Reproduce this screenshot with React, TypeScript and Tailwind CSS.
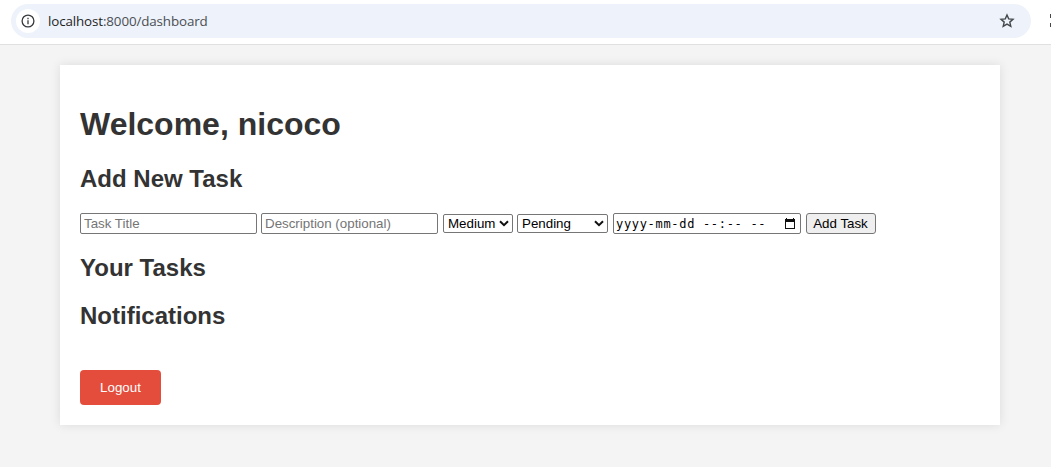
import React from "react";

const field =
  "box-border h-[21px] w-[177px] rounded-[2px] border border-[#767676] bg-white px-[3px] text-[13.333px] leading-[17px] text-black placeholder:text-[#757575] outline-none";

function Picker({ label, className }: { label: string; className: string }) {
  return (
    <button
      type="button"
      className={`flex h-[19px] items-center justify-between rounded-[2px] border border-[#767676] bg-white pl-1 pr-[3px] text-[13.333px] leading-[17px] text-black ${className}`}
    >
      <span>{label}</span>
      <svg width="10" height="7" viewBox="0 0 10 7" fill="none" stroke="#101010" strokeWidth="2">
        <path d="M1 1.2 L5 5.2 L9 1.2" />
      </svg>
    </button>
  );
}

function AddressBar() {
  return (
    <header className="flex h-[45px] items-start overflow-hidden border-b border-[#dfe0e1] bg-white pl-[11px] pt-1">
      <div className="flex h-[34px] w-[1020px] shrink-0 items-center rounded-full bg-[#edf2fb] pl-[5px] pr-4">
        <span className="flex size-6 items-center justify-center rounded-full bg-white">
          <svg width="14" height="14" viewBox="0 0 14 14" fill="none" stroke="#37393c" strokeWidth="1.3">
            <circle cx="7" cy="7" r="5.9" />
            <path d="M7 6.3V10.2M7 3.8V5.3" />
          </svg>
        </span>
        <span className="ml-2 font-['Open_Sans','Noto_Sans',sans-serif] text-[13.4px] leading-[18px] tracking-[-0.13px] text-[#4b4e52]">
          <span className="text-[#1f1f1f]">localhost</span>:8000/dashboard
        </span>
        <svg className="ml-auto" width="16" height="16" viewBox="0 0 16 16" fill="none" stroke="#44474a" strokeWidth="1.4">
          <path d="M8 2 L9.7 5.9 L14 6.3 L10.8 9.1 L11.8 13.4 L8 11.1 L4.2 13.4 L5.2 9.1 L2 6.3 L6.3 5.9 Z" />
        </svg>
      </div>
      <svg className="ml-[19px] mt-[10px] shrink-0" width="12" height="13" viewBox="0 0 12 13" fill="#44474a">
        <path d="M0 0h5v4H0zM0 9h5v4H0zM7 0h5v4H7zM7 9h5v4H7z" />
      </svg>
    </header>
  );
}

export default function App() {
  return (
    <div className="h-[467px] overflow-hidden bg-[#f4f4f4] font-['Liberation_Sans',Arial,sans-serif] text-[#333]">
      <AddressBar />
      <main className="mx-auto ml-[60px] mt-5 h-[360px] w-[940px] bg-white px-5 pt-[41px] shadow-[0_0_10px_rgba(0,0,0,0.1)]">
        <h1 className="text-[32px] font-bold leading-[37px]">Welcome, nicoco</h1>
        <h2 className="mt-[22px] text-2xl font-bold leading-7">Add New Task</h2>
        <form className="mt-5 flex items-center" onSubmit={(e) => e.preventDefault()}>
          <input className={field} placeholder="Task Title" />
          <input className={`${field} ml-1`} placeholder="Description (optional)" />
          <Picker label="Medium" className="ml-[5px] w-[70px]" />
          <Picker label="Pending" className="ml-1 w-[91px]" />
          <div className="ml-[5px] flex h-[21px] w-[188px] items-center justify-between rounded-[2px] border border-[#767676] bg-white pl-0.5 pr-1 text-black">
            <span className="whitespace-pre pt-0.5 font-['DejaVu_Sans_Mono',monospace] text-[12px] leading-[17px] tracking-[0.68px]">
              yyyy-mm-dd --:-- --
            </span>
            <svg width="12" height="12" viewBox="0 0 12 12" fill="#101010">
              <path fillRule="evenodd" d="M2 0h1v1h6V0h1v1h1v10H1V1h1zM2 4v6h8V4z" />
            </svg>
          </div>
          <button className="ml-[5px] h-[21px] w-[70px] whitespace-nowrap rounded-[3px] border border-[#767676] bg-[#efefef] pr-px text-[13.333px] leading-[17px] text-black">
            Add Task
          </button>
        </form>
        <h2 className="mt-5 text-2xl font-bold leading-7">Your Tasks</h2>
        <h2 className="mt-5 text-2xl font-bold leading-7">Notifications</h2>
        <button className="mt-10 h-[35px] w-[81px] rounded bg-[#e44d3c] text-[13.333px] leading-[15px] text-white">
          Logout
        </button>
      </main>
    </div>
  );
}
